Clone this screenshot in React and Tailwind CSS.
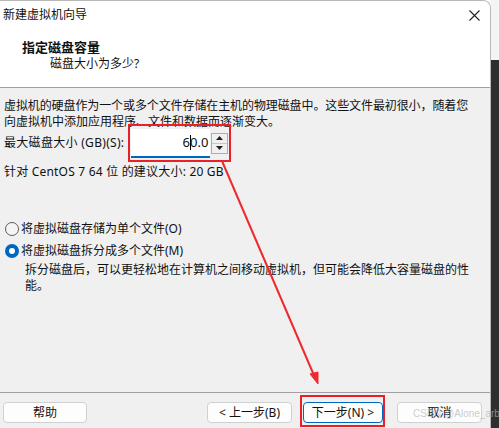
import React from "react"

const font = "font-['Noto_Sans','Noto_Sans_CJK_SC',sans-serif]"

const Radio = ({ checked, label }) => (
  <div className="flex items-center h-[16px]">
    {checked ? (
      <span className="ml-[5px] w-[14px] h-[14px] shrink-0 rounded-full bg-[#0067c0] flex items-center justify-center">
        <span className="w-[6px] h-[6px] rounded-full bg-white" />
      </span>
    ) : (
      <span className="ml-[5px] w-[14px] h-[14px] shrink-0 rounded-full border border-[#5c5c5c] bg-[#f5f5f5]" />
    )}
    <span className="ml-[2px]">{label}</span>
  </div>
)

const Btn = ({ children, className = "" }) => (
  <div
    className={`h-[21px] shrink-0 rounded-[4px] bg-[#fdfdfd] border flex items-center justify-center ${className}`}
  >
    {children}
  </div>
)

const App = () => {
  return (
    <div
      className={`relative w-[499px] h-[428px] flex overflow-hidden bg-white text-[12px] leading-[16px] text-[#111] whitespace-nowrap ${font}`}
    >
      {/* wizard window */}
      <div className="w-[491px] h-[428px] shrink-0 flex flex-col border-t border-r border-[#b8b8b8] rounded-tr-[8px] overflow-hidden bg-[#f0f0f0]">
        <div className="h-[87px] bg-white border-b border-[#a0a0a0] shrink-0">
          <div className="h-[28px] flex items-center justify-between pl-[3px] pr-[10px]">
            <span>新建虚拟机向导</span>
            <svg width="11" height="11" viewBox="0 0 11 11" className="mt-[1px]">
              <path d="M0.5 0.5 L10.5 10.5 M10.5 0.5 L0.5 10.5" stroke="#222" strokeWidth="1.1" fill="none" />
            </svg>
          </div>
          <div className="mt-[10px] pl-[22px] text-[13px] leading-[17px] font-bold">指定磁盘容量</div>
          <div className="pl-[50px]">磁盘大小为多少?</div>
        </div>

        <div className="flex-1 px-[4px] pt-[10px]">
          <div className="tracking-[-0.1px]">
            虚拟机的硬盘作为一个或多个文件存储在主机的物理磁盘中。这些文件最初很小，随着您
          </div>
          <div>向虚拟机中添加应用程序、文件和数据而逐渐变大。</div>

          <div className="mt-[-2px] h-[30px] flex items-center">
            <span className="tracking-[0.3px]">最大磁盘大小 (GB)(S):</span>
            <div className="ml-[7px] w-[79px] h-[29px] shrink-0 bg-white border-b-2 border-[#0067c0] flex items-center justify-end pr-[2px] text-[13px]">
              <span>6</span>
              <span className="w-px h-[15px] bg-black -mx-[0.5px]" />
              <span>0.0</span>
            </div>
            <div className="ml-[1px] w-[17px] h-[21px] shrink-0 border border-[#adadad] bg-[#f0f0f0] flex flex-col">
              <div className="flex-1 flex items-center justify-center border-b border-[#c8c8c8]">
                <svg width="7" height="4" viewBox="0 0 7 4">
                  <path d="M0 4 L3.5 0 L7 4 Z" fill="#222" />
                </svg>
              </div>
              <div className="flex-1 flex items-center justify-center">
                <svg width="7" height="4" viewBox="0 0 7 4">
                  <path d="M0 0 L3.5 4 L7 0 Z" fill="#222" />
                </svg>
              </div>
            </div>
          </div>

          <div className="mt-[6px] tracking-[0.2px]">针对 CentOS 7 64 位 的建议大小: 20 GB</div>

          <div className="mt-[41px] -ml-[4px]">
            <Radio label="将虚拟磁盘存储为单个文件(O)" />
          </div>
          <div className="mt-[6px] -ml-[4px]">
            <Radio checked label="将虚拟磁盘拆分成多个文件(M)" />
          </div>
          <div className="mt-[3px] pl-[21px]">
            <div>拆分磁盘后，可以更轻松地在计算机之间移动虚拟机，但可能会降低大容量磁盘的性</div>
            <div>能。</div>
          </div>
        </div>

        <div className="h-[36px] shrink-0 border-t border-[#a0a0a0] flex items-start pt-[9px]">
          <Btn className="ml-[3px] w-[84px] border-[#d0d0d0]">帮助</Btn>
          <Btn className="ml-[120px] w-[85px] border-[#d0d0d0]">&lt; 上一步(B)</Btn>
          <Btn className="ml-[11px] w-[80px] border-[#0067c0]">下一步(N) &gt;</Btn>
          <Btn className="ml-[14px] w-[85px] border-[#d0d0d0]">取消</Btn>
        </div>
      </div>

      {/* background behind window */}
      <div className="flex-1 flex flex-col">
        <div className="h-[60px] bg-[#f4f4f4]" />
        <div className="flex-1 bg-[#2e2e2e]" />
      </div>

      {/* annotations */}
      <div className="absolute left-[128px] top-[124px] w-[103px] h-[38px] border-2 border-[#e8202a]" />
      <div className="absolute left-[300px] top-[395px] w-[85px] h-[32px] border-2 border-[#e8202a]" />
      <svg className="absolute left-0 top-0 pointer-events-none" width="499" height="428">
        <path d="M222 161 L316 380" stroke="#ee2a30" strokeWidth="2" fill="none" />
        <path d="M318 384 L310 374 L318 372 Z" fill="#ee2a30" stroke="#ee2a30" strokeWidth="1" />
      </svg>
      <div className="absolute left-[413px] top-[408px] text-[10px] leading-[12px] text-[#b4b4b4]/70 font-['Liberation_Sans',sans-serif]">
        CSDN @Alone_arbt
      </div>
    </div>
  )
}

export default App
